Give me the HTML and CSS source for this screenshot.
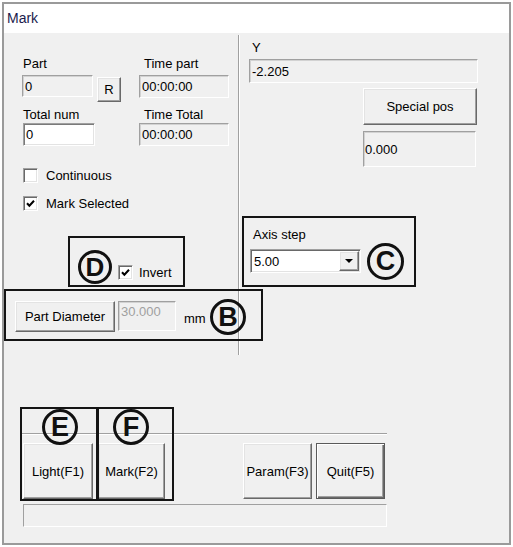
FILE: index.html
```html
<!DOCTYPE html>
<html>
<head>
<meta charset="utf-8">
<link rel="stylesheet" href="styles.css">
</head>
<body>
<div class="window">
  <div class="titlebar">Mark</div>
  <div class="client">
    <div class="top">
      <div class="leftcol">
        <div class="fields">
          <div class="field">
            <div class="lbl ind1">Part</div>
            <div class="ctrlrow">
              <div class="edit ro w-part">0</div>
              <button class="btn btn-r">R</button>
            </div>
          </div>
          <div class="field">
            <div class="lbl ind5">Time part</div>
            <div class="edit ro w-time mt4">00:00:00</div>
          </div>
          <div class="field">
            <div class="lbl ind1">Total num</div>
            <div class="edit wh w-total mt1">0</div>
          </div>
          <div class="field">
            <div class="lbl ind5">Time Total</div>
            <div class="edit ro w-time2 mt1">00:00:00</div>
          </div>
        </div>
        <div class="checks">
          <div class="check"><span class="cb"></span><span>Continuous</span></div>
          <div class="check"><span class="cb"><svg width="13" height="13" viewBox="0 0 13 13"><path d="M3 6.2 L5.4 8.8 L10 3.8" fill="none" stroke="#000" stroke-width="2"/></svg></span><span>Mark Selected</span></div>
        </div>
        <div class="check invert"><span class="cb"><svg width="13" height="13" viewBox="0 0 13 13"><path d="M3 6.2 L5.4 8.8 L10 3.8" fill="none" stroke="#000" stroke-width="2"/></svg></span><span>Invert</span></div>
        <div class="diam">
          <button class="btn btn-diam">Part Diameter</button>
          <div class="edit ro dis w-diam">30.000</div>
          <span class="unit">mm</span>
        </div>
      </div>
      <div class="vsep"></div>
      <div class="rightcol">
        <div class="lbl ind3">Y</div>
        <div class="edit ro w-y mt4">-2.205</div>
        <button class="btn btn-special">Special pos</button>
        <div class="edit ro w-val">0.000</div>
        <div class="lbl axis-lbl">Axis step</div>
        <div class="combo">
          <span class="combo-text">5.00</span>
          <span class="combo-btn"><span class="tri"></span></span>
        </div>
      </div>
    </div>
    <div class="bottom">
      <div class="etch"></div>
      <div class="btnrow">
        <button class="btn b-light">Light(F1)</button>
        <button class="btn b-mark">Mark(F2)</button>
        <button class="btn b-param">Param(F3)</button>
        <button class="btn b-quit">Quit(F5)</button>
      </div>
      <div class="status"></div>
    </div>
  </div>

  <div class="anno-box box-d"></div>
  <div class="anno-box box-b"></div>
  <div class="anno-box box-c"></div>
  <div class="anno-box box-e"></div>
  <div class="anno-box box-f"></div>
  <div class="anno-c c-d">D</div>
  <div class="anno-c c-b">B</div>
  <div class="anno-c c-c">C</div>
  <div class="anno-c c-e">E</div>
  <div class="anno-c c-f">F</div>
</div>
</body>
</html>
```

FILE: styles.css
```css
html, body {
  margin: 0;
  padding: 0;
  background: #ffffff;
}

.window {
  position: relative;
  margin: 2px 0 0 2px;
  width: 509px;
  height: 543px;
  box-sizing: border-box;
  border: 2px solid #9a9a9a;
  background: #f0f0f0;
  font: 13px "Liberation Sans", Arial, sans-serif;
  color: #000;
}

.titlebar {
  height: 29px;
  line-height: 29px;
  background: #ffffff;
  padding-left: 3px;
  font-size: 14px;
  color: #1b1b4d;
}

.top {
  display: flex;
  height: 322px;
}

.leftcol {
  width: 216px;
  padding-left: 18px;
}

.vsep {
  width: 0;
  border-left: 1px solid #a0a0a0;
  border-right: 1px solid #ffffff;
  margin-top: 2px;
}

.rightcol {
  flex: 1;
  padding: 8px 0 0 9px;
}

.lbl {
  line-height: 14px;
  white-space: nowrap;
}
.ind1 { margin-left: 1px; }
.ind3 { margin-left: 3px; }
.ind5 { margin-left: 5px; }
.mt1 { margin-top: 1px; }
.mt4 { margin-top: 4px; }

.fields {
  display: grid;
  grid-template-columns: 117px 90px;
  row-gap: 6px;
  padding-top: 24px;
}

.ctrlrow {
  display: flex;
  align-items: flex-start;
  gap: 4px;
  margin-top: 4px;
}

.edit {
  box-sizing: border-box;
  display: flex;
  align-items: center;
  padding-left: 2px;
  border: 1px solid;
  border-color: #a0a0a0 #ffffff #ffffff #a0a0a0;
  white-space: nowrap;
}
.edit.ro {
  background: #f0f0f0;
  box-shadow: inset 1px 1px 0 #d2d2d2;
}
.edit.wh {
  background: #ffffff;
  box-shadow: inset 1px 1px 0 #7a7a7a, inset -1px -1px 0 #e3e3e3;
}
.edit.dis {
  color: #a0a0a0;
  align-items: flex-start;
  padding-top: 2px;
}

.w-part { width: 71px; height: 22px; }
.w-time { width: 90px; height: 23px; }
.w-time2 { width: 90px; height: 23px; }
.w-total { width: 72px; height: 23px; margin-left: 1px; }
.w-diam { width: 58px; height: 30px; margin-left: 3px; }
.w-y { width: 229px; height: 24px; }
.w-val { width: 113px; height: 36px; margin-left: 114px; margin-top: 6px; padding-left: 1px; }

.btn {
  box-sizing: border-box;
  padding: 0;
  margin: 0;
  background: #f0f0f0;
  font: inherit;
  color: #000;
  border: 1px solid;
  border-color: #ffffff #696969 #696969 #ffffff;
  box-shadow: inset -1px -1px 0 #a0a0a0, inset 1px 1px 0 #e3e3e3;
  white-space: nowrap;
}

.btn-r { width: 24px; height: 25px; margin-top: 2px; }

.checks {
  margin-top: 22px;
  display: flex;
  flex-direction: column;
  gap: 13px;
}

.check {
  display: flex;
  align-items: center;
  height: 15px;
  margin-left: 1px;
  gap: 8px;
}

.cb {
  box-sizing: border-box;
  width: 15px;
  height: 15px;
  border: 1px solid;
  border-color: #a0a0a0 #ffffff #ffffff #a0a0a0;
  background: #ffffff;
  box-shadow: inset 1px 1px 0 #696969, inset -1px -1px 0 #e3e3e3;
  display: flex;
  align-items: center;
  justify-content: center;
}
.cb svg { display: block; }

.invert {
  margin-top: 54px;
  margin-left: 96px;
  gap: 6px;
}

.diam {
  display: flex;
  align-items: flex-start;
  margin-top: 21px;
  margin-left: -7px;
}
.btn-diam { width: 100px; height: 31px; }
.unit { margin-left: 8px; margin-top: 10px; }

.btn-special {
  display: block;
  width: 114px;
  height: 37px;
  margin: 5px 0 0 114px;
}

.axis-lbl { margin: 61px 0 0 4px; }

.combo {
  box-sizing: border-box;
  display: flex;
  align-items: center;
  width: 111px;
  height: 24px;
  margin: 7px 0 0 1px;
  background: #ffffff;
  border: 1px solid;
  border-color: #a0a0a0 #ffffff #ffffff #a0a0a0;
  box-shadow: inset 1px 1px 0 #696969, inset -1px -1px 0 #e3e3e3;
}
.combo-text { flex: 1; padding-left: 3px; }
.combo-btn {
  box-sizing: border-box;
  width: 20px;
  height: 20px;
  margin-right: 1px;
  background: #f0f0f0;
  border: 1px solid;
  border-color: #ffffff #696969 #696969 #ffffff;
  box-shadow: inset -1px -1px 0 #a0a0a0, inset 1px 1px 0 #e3e3e3;
  display: flex;
  align-items: center;
  justify-content: center;
}
.tri {
  width: 0;
  height: 0;
  border-left: 4px solid transparent;
  border-right: 4px solid transparent;
  border-top: 4px solid #000;
}

.bottom {
  padding-left: 18px;
  margin-top: 78px;
}

.etch {
  width: 365px;
  height: 0;
  border-top: 1px solid #a0a0a0;
  border-bottom: 1px solid #ffffff;
}

.btnrow {
  display: flex;
  margin: 8px 0 0 1px;
}
.btnrow .btn { height: 56px; }
.b-light { width: 70px; }
.b-mark { width: 67px; margin-left: 5px; }
.b-param { width: 69px; margin-left: 78px; }
.b-quit {
  width: 69px;
  margin-left: 4px;
  border-color: #5a5a5a;
  box-shadow: inset 1px 1px 0 #ffffff, inset -1px -1px 0 #696969, inset -2px -2px 0 #a0a0a0;
}

.status {
  box-sizing: border-box;
  width: 364px;
  height: 23px;
  margin: 5px 0 0 1px;
  border: 1px solid;
  border-color: #a0a0a0 #ffffff #ffffff #a0a0a0;
}

/* annotations overlaid on the screenshot */
.anno-box {
  position: absolute;
  box-sizing: border-box;
  border: 2px solid #141414;
}
.box-d { left: 64px; top: 232px; width: 117px; height: 51px; }
.box-b { left: 0; top: 285px; width: 259px; height: 52px; }
.box-c { left: 238px; top: 212px; width: 174px; height: 71px; }
.box-e { left: 16px; top: 403px; width: 79px; height: 94px; }
.box-f { left: 92px; top: 403px; width: 78px; height: 94px; }

.anno-c {
  position: absolute;
  box-sizing: border-box;
  border: 3px solid #111;
  border-radius: 50%;
  display: flex;
  align-items: center;
  justify-content: center;
  font: bold 27px/1 "Liberation Sans", Arial, sans-serif;
  color: #111;
}
.c-d { left: 74px; top: 246px; width: 34px; height: 34px; font-size: 26px; }
.c-b { left: 206px; top: 295px; width: 36px; height: 36px; }
.c-c { left: 363px; top: 239px; width: 37px; height: 37px; }
.c-e { left: 38px; top: 405px; width: 36px; height: 36px; }
.c-f { left: 109px; top: 405px; width: 36px; height: 36px; }
```
